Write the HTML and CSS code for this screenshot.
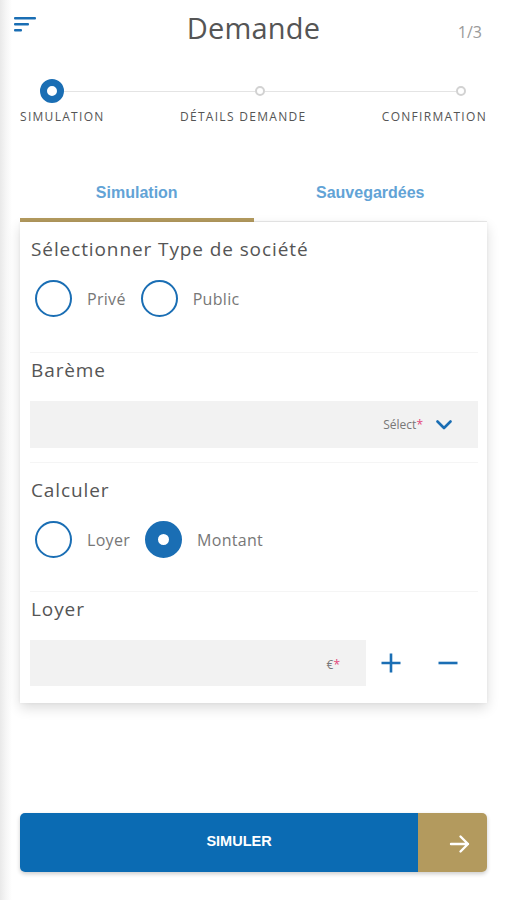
FILE: index.html
```html
<!DOCTYPE html>
<html lang="fr">
<head>
<meta charset="utf-8">
<title>Demande</title>
<link rel="stylesheet" href="styles.css">
</head>
<body>
<div class="page">
  <header class="header">
    <div class="menu">
      <svg width="24" height="18" viewBox="0 0 24 18"><rect x="0" y="1" width="22" height="2.6" rx="1" fill="#1a6eb4"/><rect x="0" y="7" width="15" height="2.6" rx="1" fill="#1a6eb4"/><rect x="0" y="13" width="8" height="2.6" rx="1" fill="#1a6eb4"/></svg>
    </div>
    <h1 class="title">Demande</h1>
    <div class="count">1/3</div>
  </header>

  <div class="stepper">
    <div class="dots">
      <span class="dot dot-active"></span>
      <span class="track"></span>
      <span class="dot"></span>
      <span class="track"></span>
      <span class="dot"></span>
    </div>
    <div class="labels">
      <span>SIMULATION</span>
      <span>DÉTAILS DEMANDE</span>
      <span>CONFIRMATION</span>
    </div>
  </div>

  <nav class="tabs">
    <div class="tab tab-active">Simulation</div>
    <div class="tab">Sauvegardées</div>
  </nav>

  <section class="card">
    <div class="group g1">
      <div class="label">Sélectionner Type de société</div>
      <div class="radios">
        <div class="radio"><span class="circle"></span><span class="rtext">Privé</span></div>
        <div class="radio"><span class="circle"></span><span class="rtext">Public</span></div>
      </div>
    </div>
    <div class="group g2">
      <div class="label">Barème</div>
      <div class="select">
        <span class="ph">Sélect<span class="req">*</span></span>
        <svg class="chev" width="16" height="10" viewBox="0 0 16 10"><path d="M1.5 1.5 L8 8 L14.5 1.5" fill="none" stroke="#1a6eb4" stroke-width="2.6" stroke-linecap="round" stroke-linejoin="round"/></svg>
      </div>
    </div>
    <div class="group g3">
      <div class="label">Calculer</div>
      <div class="radios">
        <div class="radio"><span class="circle"></span><span class="rtext">Loyer</span></div>
        <div class="radio"><span class="circle circle-on"></span><span class="rtext">Montant</span></div>
      </div>
    </div>
    <div class="group g4">
      <div class="label">Loyer</div>
      <div class="amount-row">
        <div class="input"><span class="ph">€<span class="req">*</span></span></div>
        <svg class="pm" width="22" height="22" viewBox="0 0 22 22"><path d="M11 1.5 V20.5 M1.5 11 H20.5" stroke="#1a6eb4" stroke-width="2.6" fill="none"/></svg>
        <svg class="pm" width="22" height="22" viewBox="0 0 22 22"><path d="M1.5 11 H20.5" stroke="#1a6eb4" stroke-width="2.6" fill="none"/></svg>
      </div>
    </div>
  </section>

  <div class="action">
    <button class="btn">
      <span class="btn-main">SIMULER</span>
      <span class="btn-arrow"><svg width="22" height="20" viewBox="0 0 22 20"><path d="M2 10 H19 M11.5 2.5 L19 10 L11.5 17.5" fill="none" stroke="#fff" stroke-width="2.4" stroke-linecap="round" stroke-linejoin="round"/></svg></span>
    </button>
  </div>
</div>
</body>
</html>
```
FILE: styles.css
```css
* { box-sizing: border-box; }
html, body { margin: 0; padding: 0; }
body {
  width: 507px;
  min-height: 900px;
  background: linear-gradient(to right, #e9e9e9 0px, #f6f6f6 6px, #ffffff 12px);
  font-family: "Open Sans", "Liberation Sans", sans-serif;
  color: #555;
}
.page { display: flex; flex-direction: column; min-height: 900px; }

.header {
  display: grid;
  grid-template-columns: 80px 1fr 80px;
  align-items: center;
  height: 56px;
}
.menu { padding-left: 14px; display: flex; align-items: center; height: 100%; padding-bottom: 6px; }
.menu svg { display: block; }
.title {
  margin: 0;
  text-align: center;
  font-weight: 400;
  font-size: 29px;
  line-height: 40px;
  color: #555;
  letter-spacing: 0.2px;
}
.count {
  text-align: right;
  padding-right: 25px;
  font-size: 16px;
  color: #9a9a9a;
  padding-top: 8px;
}

.stepper { padding-top: 23px; }
.dots {
  display: flex;
  align-items: center;
  padding: 0 41px 0 40px;
  height: 24px;
}
.dot {
  width: 10px; height: 10px;
  border-radius: 50%;
  border: 2px solid #d2d2d2;
  background: #fff;
  flex: none;
}
.dot-active {
  width: 24px; height: 24px;
  border: 7px solid #1a6eb4;
}
.track { flex: 1; height: 1px; background: #e4e4e4; }
.labels {
  display: flex;
  justify-content: space-between;
  padding: 0 20px 0 20px;
  margin-top: 6px;
  font-size: 12px;
  letter-spacing: 1.3px;
  color: #555;
  line-height: 16px;
}

.tabs {
  display: flex;
  margin: 50px 20px 0 20px;
}
.tab {
  flex: 1;
  text-align: center;
  font-family: "Liberation Sans", Arial, sans-serif;
  font-weight: 700;
  font-size: 16px;
  color: #62a3d6;
  height: 47px;
  line-height: 24px;
  padding-top: 6px;
  border-bottom: 1px solid #ececec;
}
.tab-active { border-bottom: 4px solid #b39a5e; }

.card {
  margin: 0 20px;
  background: #fff;
  box-shadow: 0 5px 12px rgba(0,0,0,0.14), 0 0 3px rgba(0,0,0,0.05);
  padding: 0 9px 0 10px;
}
.group { display: flex; flex-direction: column; }
.group + .group { border-top: 1px solid #f5f5f5; }
.label {
  font-size: 19px;
  line-height: 25px;
  letter-spacing: 0.9px;
  color: #555;
  padding-left: 1px;
}
.g1 { padding: 15px 0 35px; }
.g2 { padding: 5px 0 14px; }
.g3 { padding: 15px 0 33px; }
.g4 { padding: 5px 0 17px; }

.radios { display: flex; gap: 15px; margin-top: 18px; padding-left: 5px; }
.radio { display: flex; align-items: center; gap: 15px; }
.circle {
  width: 37px; height: 37px;
  border-radius: 50%;
  border: 2.5px solid #1a6eb4;
  flex: none;
}
.circle-on { border: 13px solid #1a6eb4; background: #fff; }
.rtext { font-size: 16px; color: #777; letter-spacing: 0.3px; }

.select {
  margin-top: 18px;
  height: 47px;
  background: #f2f2f2;
  display: flex;
  align-items: center;
  justify-content: flex-end;
  padding-right: 26px;
  gap: 13px;
}
.ph { font-size: 12px; color: #777; }
.req { color: #e2457a; }
.chev { display: block; margin-top: 1px; }

.amount-row {
  margin-top: 18px;
  display: flex;
  align-items: center;
}
.input {
  width: 336px;
  height: 46px;
  background: #f2f2f2;
  display: flex;
  align-items: center;
  justify-content: flex-end;
  padding-right: 26px;
  padding-top: 2px;
}
.pm { display: block; margin-left: 14px; }
.pm + .pm { margin-left: 35px; }

.action { margin-top: 110px; padding: 0 20px; }
.btn {
  display: flex;
  width: 100%;
  height: 59px;
  padding: 0;
  border: none;
  border-radius: 5px;
  overflow: hidden;
  box-shadow: 0 2px 4px rgba(0,0,0,0.2);
}
.btn-main {
  flex: 1;
  background: #0b6bb3;
  color: #fff;
  font-family: "Liberation Sans", Arial, sans-serif;
  font-weight: 700;
  font-size: 14.5px;
  display: flex;
  align-items: center;
  justify-content: center;
  padding-left: 40px;
  padding-bottom: 4px;
}
.btn-arrow {
  width: 69px;
  background: #b39a5e;
  display: flex;
  align-items: center;
  justify-content: center;
  padding-left: 14px;
  padding-top: 3px;
}
.btn-arrow svg { display: block; }
```
